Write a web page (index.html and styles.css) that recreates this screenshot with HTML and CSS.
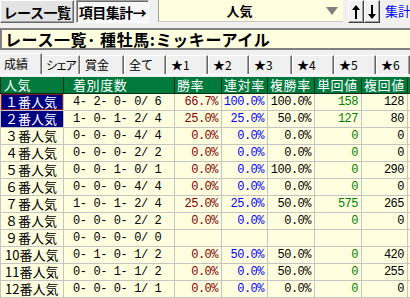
FILE: index.html
```html
<!DOCTYPE html>
<html lang="ja">
<head>
<meta charset="utf-8">
<link rel="stylesheet" href="styles.css">
</head>
<body>
<div class="app">
  <div class="toolbar">
    <div class="btn btn-list">レース一覧</div>
    <div class="btn btn-item">項目集計→</div>
    <div class="combo">
      <span class="combo-text">人気</span>
      <svg class="combo-arrow" width="12" height="8" viewBox="0 0 12 8"><polygon points="0,0 12,0 6,8" fill="#808080"/></svg>
    </div>
    <div class="arrows">
      <div class="abtn"><svg width="8" height="14" viewBox="0 0 8 14"><polygon points="4,0 8,5 5,5 5,14 3,14 3,5 0,5" fill="#000"/></svg></div>
      <div class="abtn"><svg width="8" height="14" viewBox="0 0 8 14"><polygon points="4,14 8,9 5,9 5,0 3,0 3,9 0,9" fill="#000"/></svg></div>
    </div>
    <span class="sum">集計</span>
  </div>
  <div class="titlebox">レース一覧･ 種牡馬:ミッキーアイル</div>
  <div class="tabs">
    <div class="tab tab-active w42">成績</div>
    <div class="tab w38 tight">シェア</div>
    <div class="tab w44">賞金</div>
    <div class="tab w42">全て</div>
    <div class="tab w42">★1</div>
    <div class="tab w41">★2</div>
    <div class="tab w43">★3</div>
    <div class="tab w42">★4</div>
    <div class="tab w42">★5</div>
    <div class="tab w34">★6</div>
  </div>
  <div class="gridwrap">
    <table class="grid">
      <colgroup>
        <col class="c1"><col class="c2"><col class="c3"><col class="c4"><col class="c5"><col class="c6"><col class="c7"><col class="c8">
      </colgroup>
      <thead>
        <tr><th>人気</th><th class="hrec">着別度数</th><th class="hc">勝率</th><th class="hc">連対率</th><th class="hc">複勝率</th><th class="hc">単回値</th><th class="hc">複回値</th><th></th></tr>
      </thead>
      <tbody>
        <tr><td class="pop sel focus">１番人気</td><td class="rec">4- 2- 0- 0/ 6</td><td class="n win">66.7%</td><td class="n ren">100.0%</td><td class="n fuku">100.0%</td><td class="n tan">158</td><td class="n fk">128</td><td></td></tr>
        <tr><td class="pop sel">２番人気</td><td class="rec">1- 0- 1- 2/ 4</td><td class="n win">25.0%</td><td class="n ren">25.0%</td><td class="n fuku">50.0%</td><td class="n tan">127</td><td class="n fk">80</td><td></td></tr>
        <tr><td class="pop">３番人気</td><td class="rec">0- 0- 0- 4/ 4</td><td class="n win">0.0%</td><td class="n ren">0.0%</td><td class="n fuku">0.0%</td><td class="n tan">0</td><td class="n fk">0</td><td></td></tr>
        <tr><td class="pop">４番人気</td><td class="rec">0- 0- 0- 2/ 2</td><td class="n win">0.0%</td><td class="n ren">0.0%</td><td class="n fuku">0.0%</td><td class="n tan">0</td><td class="n fk">0</td><td></td></tr>
        <tr><td class="pop">５番人気</td><td class="rec">0- 0- 1- 0/ 1</td><td class="n win">0.0%</td><td class="n ren">0.0%</td><td class="n fuku">100.0%</td><td class="n tan">0</td><td class="n fk">290</td><td></td></tr>
        <tr><td class="pop">６番人気</td><td class="rec">0- 0- 0- 4/ 4</td><td class="n win">0.0%</td><td class="n ren">0.0%</td><td class="n fuku">0.0%</td><td class="n tan">0</td><td class="n fk">0</td><td></td></tr>
        <tr><td class="pop">７番人気</td><td class="rec">1- 0- 1- 2/ 4</td><td class="n win">25.0%</td><td class="n ren">25.0%</td><td class="n fuku">50.0%</td><td class="n tan">575</td><td class="n fk">265</td><td></td></tr>
        <tr><td class="pop">８番人気</td><td class="rec">0- 0- 0- 2/ 2</td><td class="n win">0.0%</td><td class="n ren">0.0%</td><td class="n fuku">0.0%</td><td class="n tan">0</td><td class="n fk">0</td><td></td></tr>
        <tr><td class="pop">９番人気</td><td class="rec">0- 0- 0- 0/ 0</td><td></td><td></td><td></td><td></td><td></td><td></td></tr>
        <tr><td class="pop">10番人気</td><td class="rec">0- 1- 0- 1/ 2</td><td class="n win">0.0%</td><td class="n ren">50.0%</td><td class="n fuku">50.0%</td><td class="n tan">0</td><td class="n fk">420</td><td></td></tr>
        <tr><td class="pop">11番人気</td><td class="rec">0- 0- 1- 1/ 2</td><td class="n win">0.0%</td><td class="n ren">0.0%</td><td class="n fuku">50.0%</td><td class="n tan">0</td><td class="n fk">255</td><td></td></tr>
        <tr><td class="pop">12番人気</td><td class="rec">0- 0- 0- 1/ 1</td><td class="n win">0.0%</td><td class="n ren">0.0%</td><td class="n fuku">0.0%</td><td class="n tan">0</td><td class="n fk">0</td><td></td></tr>
      </tbody>
    </table>
  </div>
</div>
</body>
</html>
```
FILE: styles.css
```css
html, body {
  margin: 0;
  padding: 0;
  background: #f0f0f0;
}
.app {
  width: 410px;
  height: 298px;
  overflow: hidden;
  font-family: "Noto Sans CJK JP", sans-serif;
  color: #000;
}
.toolbar {
  display: flex;
  align-items: flex-start;
  height: 24px;
}
.toolbar > * {
  flex-shrink: 0;
}
.btn {
  box-sizing: border-box;
  height: 23px;
  display: flex;
  align-items: center;
  justify-content: center;
  font-weight: bold;
  font-size: 14px;
  letter-spacing: -0.5px;
  white-space: nowrap;
  border: 1px solid;
  border-color: #ffffff #696969 #696969 #ffffff;
  box-shadow: inset -1px -1px 0 #a0a0a0;
}
.btn-list {
  width: 74px;
  background: #e3e3e3;
}
.btn-item {
  width: 73px;
  margin-left: 2px;
  background: #f7f7f7;
  border-color: #a0a0a0 #ffffff #ffffff #a0a0a0;
  box-shadow: inset 1px 1px 0 #696969;
}
.combo {
  box-sizing: border-box;
  width: 185px;
  height: 22px;
  margin-left: 9px;
  background: #ffffe0;
  border-left: 1px solid #a0a0a0;
  border-bottom: 1px solid #c8c8c8;
  display: flex;
  align-items: center;
}
.combo-text {
  flex: 1;
  text-align: center;
  font-weight: bold;
  font-size: 13px;
  padding-right: 6px;
}
.combo-arrow {
  margin-right: 5px;
}
.arrows {
  display: flex;
  margin-left: 5px;
}
.abtn {
  box-sizing: border-box;
  width: 16px;
  height: 23px;
  background: #f0f0f0;
  border: 1px solid;
  border-color: #ffffff #404040 #404040 #ffffff;
  box-shadow: inset -1px -1px 0 #a0a0a0;
  display: flex;
  align-items: center;
  justify-content: center;
}
.sum {
  margin-left: 5px;
  font-size: 13px;
  color: #0000ff;
  line-height: 22px;
  white-space: nowrap;
}
.titlebox {
  box-sizing: border-box;
  margin-top: 4px;
  height: 22px;
  background: #ffffe0;
  border-top: 2px solid #808080;
  border-bottom: 2px solid #808080;
  border-left: 2px solid #808080;
  font-size: 16px;
  font-weight: bold;
  line-height: 18px;
  padding-left: 3px;
  white-space: nowrap;
  letter-spacing: 0.6px;
}
.tabs {
  display: flex;
  align-items: flex-end;
  height: 22px;
  margin-top: 2px;
  border-bottom: 1px solid #ffffff;
}
.tab {
  box-sizing: border-box;
  height: 19px;
  font-size: 12px;
  line-height: 17px;
  padding-left: 4px;
  border-top: 1px solid #ffffff;
  border-left: 1px solid #ffffff;
  border-right: 1px solid #696969;
  box-shadow: inset -1px 0 0 #a0a0a0;
  background: #f0f0f0;
  white-space: nowrap;
}
.tab.tight {
  letter-spacing: -2.5px;
  padding-left: 3px;
}
.tab-active {
  height: 21px;
  line-height: 19px;
  border-left: none;
}
.w42 { width: 42px; }
.w38 { width: 38px; }
.w44 { width: 44px; }
.w41 { width: 41px; }
.w43 { width: 43px; }
.w34 { width: 34px; }
.gridwrap {
  margin-top: 2px;
  width: 410px;
  overflow: hidden;
}
.grid {
  border-collapse: collapse;
  table-layout: fixed;
  width: 424px;
  font-size: 13px;
}
.c1 { width: 63px; }
.c2 { width: 111px; }
.c3 { width: 47px; }
.c4 { width: 46px; }
.c5 { width: 47px; }
.c6 { width: 47px; }
.c7 { width: 46px; }
.c8 { width: 17px; }
.grid th {
  height: 16px;
  padding: 0 0 0 3px;
  background: #007a3c;
  color: #ffffff;
  font-weight: normal;
  text-align: left;
  line-height: 16px;
  border: 1px solid #0d2e1a;
  border-top: none;
  white-space: nowrap;
  font-size: 13px;
  letter-spacing: 0.6px;
}
.grid th.hrec {
  padding-left: 9px;
}
.grid th.hc {
  padding-left: 2px;
}
.grid td {
  height: 16px;
  padding: 0;
  background: #ffffe0;
  border: 1px solid #c4c4c4;
  line-height: 16px;
  white-space: nowrap;
  overflow: hidden;
}
.grid td.pop {
  padding-left: 4px;
}
.grid td.sel {
  background: #000080;
  color: #ffffff;
}
.grid td.focus {
  box-shadow: inset 0 0 0 1px #8b1a1a;
}
.grid td.rec {
  padding-left: 9px;
  font-family: "Liberation Mono", monospace;
  font-size: 12px;
  letter-spacing: -0.4px;
}
.grid td.n {
  text-align: right;
  padding-right: 3px;
  font-family: "Liberation Mono", monospace;
  font-size: 12px;
  letter-spacing: -0.5px;
}
.win { color: #800000; }
.ren { color: #0000ff; }
.fuku { color: #000000; }
.tan { color: #008000; }
.fk { color: #000000; }
```
